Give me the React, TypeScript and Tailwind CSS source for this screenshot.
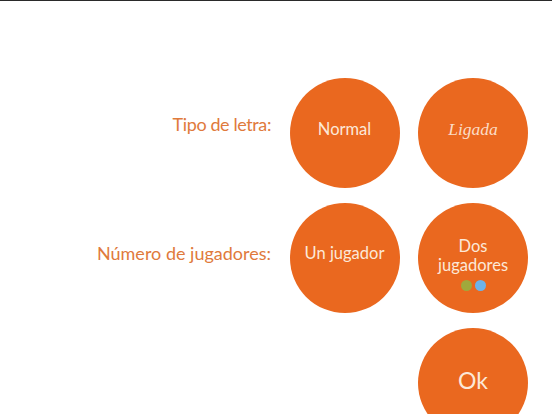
const circle =
  "flex h-[110px] w-[110px] flex-col items-center justify-center rounded-full bg-[#ea681f] text-center text-[#fce8d8]";
const label = "text-right text-[18px] text-[#e07a3c]";

function Option({ children }: { children: React.ReactNode }) {
  return <div className={circle}>{children}</div>;
}

export default function App() {
  return (
    <div className="h-[414px] w-[552px] overflow-hidden bg-white font-['Lato','Noto_Sans',sans-serif]">
      <div className="h-px bg-[#2a2a2a]" />

      <div className="grid grid-cols-[271px_110px_110px] items-center gap-x-[18.5px] gap-y-[15px] pt-[77px]">
        {/* Tipo de letra */}
        <div className={`${label} pb-[18px] tracking-[-0.4px]`}>Tipo de letra:</div>
        <Option>
          <span className="pb-[8px] text-[16.5px]">Normal</span>
        </Option>
        <Option>
          <span className="pb-[8px] font-['Liberation_Serif',serif] text-[17.5px] font-normal italic text-[#fbdcc6]">
            Ligada
          </span>
        </Option>

        {/* Jugadores */}
        <div className={`${label} pb-[10px]`}>Número de jugadores:</div>
        <Option>
          <span className="pb-[10px] text-[16.5px]">Un jugador</span>
        </Option>
        <Option>
          <span className="mt-[12px] text-[16.5px] leading-[19px]">
            Dos
            <br />
            jugadores
          </span>
          <div className="mt-[5px] flex gap-[3px]">
            <div className="h-[11px] w-[11px] rounded-full bg-[#a0a93c]" />
            <div className="h-[11px] w-[11px] rounded-full bg-[#6db3ea]" />
          </div>
        </Option>

        <div className="col-start-3">
          <Option>
            <span className="pb-[6px] text-[23px]">Ok</span>
          </Option>
        </div>
      </div>
    </div>
  );
}
